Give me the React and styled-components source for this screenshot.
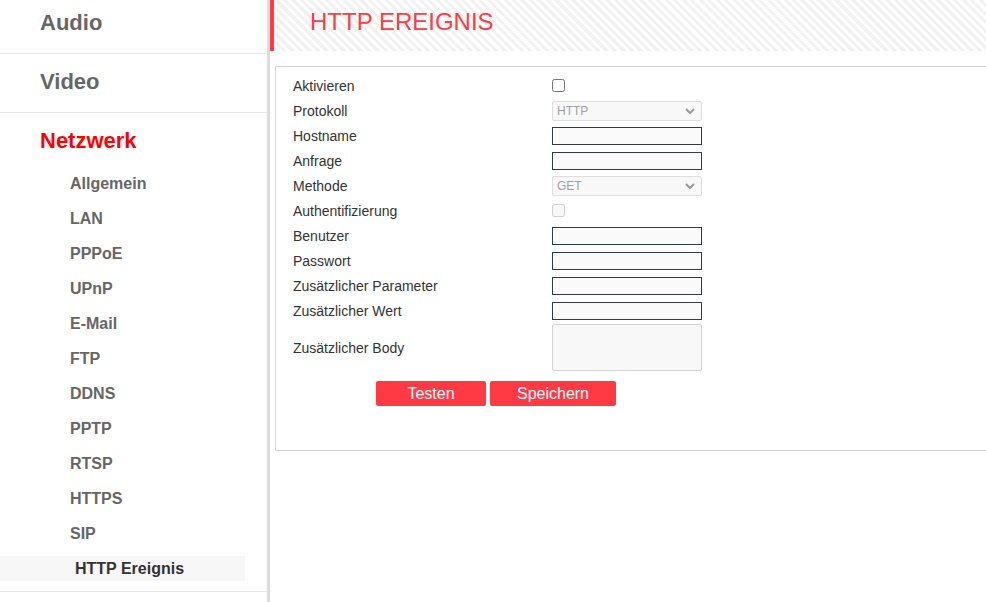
import { createGlobalStyle, styled } from "styled-components";

const GlobalStyle = createGlobalStyle`
  html, body {
    margin: 0;
    padding: 0;
    height: 100%;
    overflow: hidden;
    background: #fff;
    font-family: "Liberation Sans", Arial, sans-serif;
  }
`;

const Layout = styled.div`
  display: flex;
  height: 100vh;
`;

const Sidebar = styled.nav`
  width: 267px;
  flex-shrink: 0;
  border-right: 3px solid #dcdcdc;
  overflow: hidden;
`;

const SidebarInner = styled.div`
  margin-top: -5px;
`;

const Section = styled.div`
  border-bottom: 1px solid #e6e6e6;
  padding: ${props => props.$open ? "13px 0 5px" : "13px 0 15px"};
`;

const SectionTitle = styled.div`
  padding-left: 40px;
  font-size: 22px;
  font-weight: bold;
  line-height: 30px;
  color: ${props => props.$active ? "#ff0000" : "#666"};
`;

const SubList = styled.ul`
  list-style: none;
  margin: 10px 0 0;
  padding: 0;
`;

const SubItem = styled.li`
  height: 35px;
  display: flex;
  align-items: center;
`;

const SubLink = styled.span`
  display: flex;
  align-items: center;
  font-size: 16px;
  font-weight: bold;
  color: ${props => props.$active ? "#333" : "#666"};
  padding-left: ${props => props.$active ? "75px" : "70px"};
  width: ${props => props.$active ? "245px" : "auto"};
  height: 25px;
  box-sizing: border-box;
  background: ${props => props.$active ? "#f7f7f7" : "transparent"};
`;

const Main = styled.main`
  flex: 1;
  min-width: 0;
`;

const Header = styled.header`
  height: 51px;
  border-left: 4px solid #ff3b45;
  padding-left: 36px;
  background: repeating-linear-gradient(45deg, #f1f1f1 0 3px, #fff 3px 6px);
`;

const HeaderTitle = styled.h1`
  margin: 0;
  font-size: 24px;
  font-weight: normal;
  line-height: 44px;
  color: #ff3b45;
`;

const Panel = styled.section`
  margin: 15px -20px 0 5px;
  border: 1px solid #d4d4d4;
  padding: 6px 17px 44px;
`;

const Row = styled.div`
  display: flex;
  align-items: center;
  height: ${props => props.$tall ? "49px" : "25px"};
`;

const Label = styled.label`
  width: 259px;
  flex-shrink: 0;
  font-size: 14px;
  color: #333;
`;

const Checkbox = styled.input.attrs({ type: "checkbox" })`
  margin: 0;
  width: 13px;
  height: 13px;
`;

const TextInput = styled.input.attrs({ type: "text" })`
  box-sizing: border-box;
  width: 150px;
  height: 18px;
  margin: 0;
  border: 1px solid #2f3b45;
  background: #fafafa;
  padding: 0 4px;
  font-size: 12px;
`;

const SelectWrap = styled.div`
  position: relative;
  width: 150px;
  height: 20px;
`;

const Select = styled.select`
  appearance: none;
  box-sizing: border-box;
  width: 100%;
  height: 100%;
  margin: 0;
  border: 1px solid #dedede;
  border-radius: 2px;
  background: #f8f8f8;
  color: #a0a0a0;
  font-family: "Liberation Sans", Arial, sans-serif;
  font-size: 12px;
  padding: 0 4px;
  opacity: 1;
`;

const Chevron = styled.svg`
  position: absolute;
  right: 7px;
  top: 7px;
  pointer-events: none;
`;

const TextArea = styled.textarea`
  box-sizing: border-box;
  width: 150px;
  height: 47px;
  margin: 0;
  border: 1px solid #d3d3d3;
  border-radius: 2px;
  background: #f8f8f8;
  resize: none;
`;

const Actions = styled.div`
  display: flex;
  gap: 4px;
  margin: 9px 0 0 83px;
`;

const Button = styled.button`
  width: ${props => props.$width};
  height: 25px;
  border: none;
  border-radius: 2px;
  background: #ff3a44;
  color: #fff;
  font-family: "Liberation Sans", Arial, sans-serif;
  font-size: 16px;
  padding: 0;
`;

const navItems = ["Allgemein", "LAN", "PPPoE", "UPnP", "E-Mail", "FTP", "DDNS", "PPTP", "RTSP", "HTTPS", "SIP", "HTTP Ereignis"];

function DropDown({ value }) {
  return (
    <SelectWrap>
      <Select disabled defaultValue={value}>
        <option>{value}</option>
      </Select>
      <Chevron width="10" height="7" viewBox="0 0 10 7">
        <polyline points="1,1 5,5 9,1" fill="none" stroke="#9a9a9a" strokeWidth="2" />
      </Chevron>
    </SelectWrap>
  );
}

export default function App() {
  return (
    <>
      <GlobalStyle />
      <Layout>
        <Sidebar>
          <SidebarInner>
            <Section>
              <SectionTitle>Audio</SectionTitle>
            </Section>
            <Section>
              <SectionTitle>Video</SectionTitle>
            </Section>
            <Section $open>
              <SectionTitle $active>Netzwerk</SectionTitle>
              <SubList>
                {navItems.map(item => (
                  <SubItem key={item}>
                    <SubLink $active={item === "HTTP Ereignis"}>{item}</SubLink>
                  </SubItem>
                ))}
              </SubList>
            </Section>
          </SidebarInner>
        </Sidebar>
        <Main>
          <Header>
            <HeaderTitle>HTTP EREIGNIS</HeaderTitle>
          </Header>
          <Panel>
            <Row>
              <Label>Aktivieren</Label>
              <Checkbox />
            </Row>
            <Row>
              <Label>Protokoll</Label>
              <DropDown value="HTTP" />
            </Row>
            <Row>
              <Label>Hostname</Label>
              <TextInput />
            </Row>
            <Row>
              <Label>Anfrage</Label>
              <TextInput />
            </Row>
            <Row>
              <Label>Methode</Label>
              <DropDown value="GET" />
            </Row>
            <Row>
              <Label>Authentifizierung</Label>
              <Checkbox disabled />
            </Row>
            <Row>
              <Label>Benutzer</Label>
              <TextInput />
            </Row>
            <Row>
              <Label>Passwort</Label>
              <TextInput />
            </Row>
            <Row>
              <Label>Zusätzlicher Parameter</Label>
              <TextInput />
            </Row>
            <Row>
              <Label>Zusätzlicher Wert</Label>
              <TextInput />
            </Row>
            <Row $tall>
              <Label>Zusätzlicher Body</Label>
              <TextArea disabled />
            </Row>
            <Actions>
              <Button $width="110px">Testen</Button>
              <Button $width="126px">Speichern</Button>
            </Actions>
          </Panel>
        </Main>
      </Layout>
    </>
  );
}
